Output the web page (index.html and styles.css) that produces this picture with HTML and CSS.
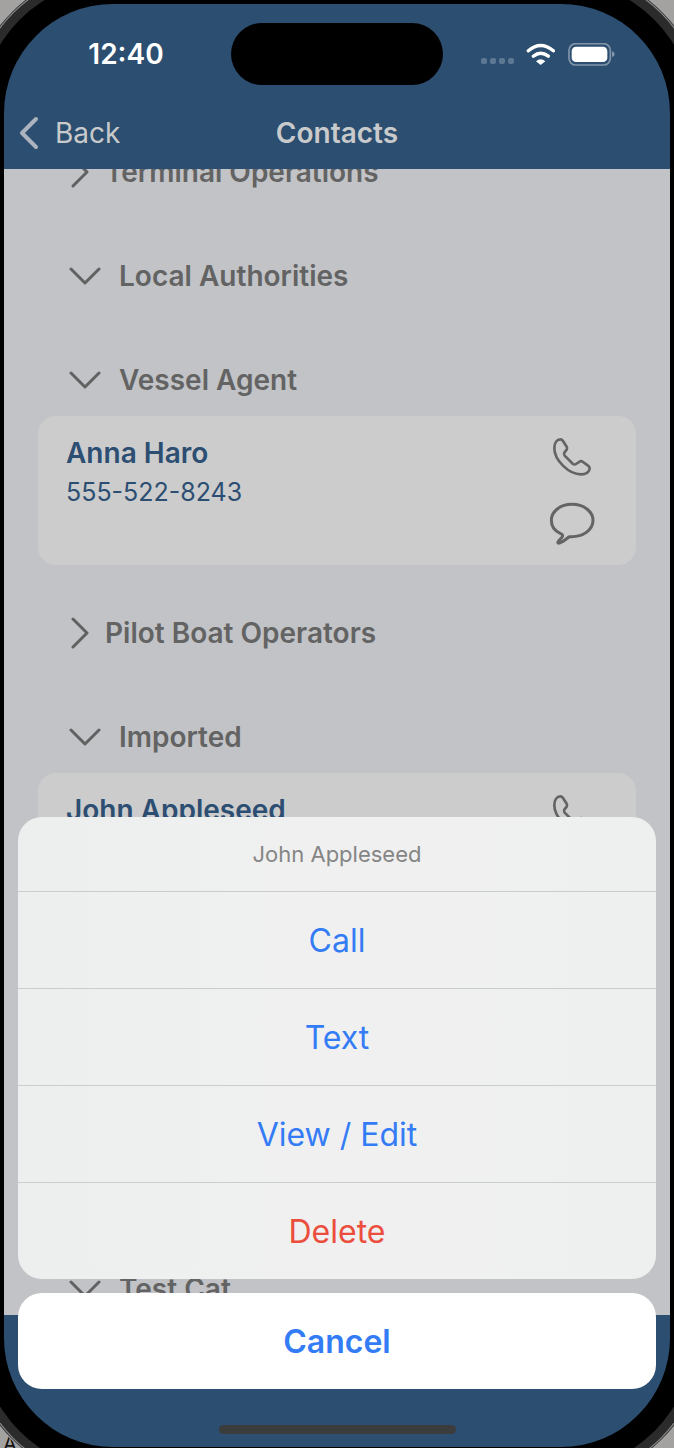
FILE: index.html
```html
<!DOCTYPE html>
<html lang="en">
<head>
<meta charset="utf-8">
<meta name="viewport" content="width=device-width, initial-scale=1">
<title>Contacts</title>
<link rel="stylesheet" href="styles.css">
</head>
<body>
<svg class="defs" aria-hidden="true">
  <symbol id="down" viewBox="0 0 32 18"><path d="M2 2 L16 16 L30 2"/></symbol>
  <symbol id="right" viewBox="0 0 18 32"><path d="M2 2 L16 16 L2 30"/></symbol>
  <symbol id="phone" viewBox="456 112 120 120"><path d="M481 119c-10 0-18 10-18 27c0 36 44 78 80 78c16 0 26-8 26-18c0-4-2-6-5-8L549 187c-4-3-7-3-10-1l-11 7c-3 2-6 2-9 0L494 168c-3-4-3-6-1-9l7-9c2-3 2-6 0-9L489 124c-2-3-5-5-8-5z"/></symbol>
  <symbol id="bubble" viewBox="446 306 138 129"><path d="M508 410C548 412 578 390 578 361C578 334 550 313 515 313S453 334 453 361C453 380 464 394 481 401C488 404 488 407 485 412L474 424C470 429 474 431 480 428C492 424 498 415 508 410Z"/></symbol>
</svg>
<span class="backdrop-letter" aria-hidden="true">A</span>
<div class="phone">
  <header class="header">
    <div class="status">
      <span class="time">12:40</span>
      <span class="island"></span>
      <span class="indicators">
        <span class="dots"><i></i><i></i><i></i><i></i></span>
        <svg class="wifi" viewBox="260 126 90 68" aria-hidden="true">
          <path class="arc" d="M267 149Q304 117 342 149M282 165Q304 147 327 165"/>
          <path class="core" d="M290 180Q304 168 318 180L306 190Q304 192 302 190Z"/>
        </svg>
        <svg class="battery" viewBox="384 126 141 69" aria-hidden="true">
          <rect class="shell" x="387" y="128" width="124" height="64" rx="20"/>
          <rect class="charge" x="395" y="137" width="107" height="46" rx="13"/>
          <path class="nub" d="M516 151Q524 153 524 160Q524 166 516 168Z"/>
        </svg>
      </span>
    </div>
    <nav class="nav">
      <button class="back" type="button">
        <svg viewBox="0 0 20 34" aria-hidden="true"><path d="M17 3 L3 17 L17 31"/></svg>
        Back
      </button>
      <h1>Contacts</h1>
    </nav>
  </header>

  <main class="content">
    <div class="groups">
      <section class="group">
        <button class="row closed" type="button"><svg><use href="#right"/></svg>Terminal Operations</button>
      </section>
      <section class="group">
        <button class="row" type="button"><svg><use href="#down"/></svg>Local Authorities</button>
      </section>
      <section class="group">
        <button class="row" type="button"><svg><use href="#down"/></svg>Vessel Agent</button>
        <article class="card">
          <div class="person"><h2>Anna Haro</h2><p>555-522-8243</p></div>
          <div class="actions">
            <button type="button" aria-label="Call Anna Haro"><svg class="i-phone"><use href="#phone"/></svg></button>
            <button type="button" aria-label="Text Anna Haro"><svg class="i-bubble"><use href="#bubble"/></svg></button>
          </div>
        </article>
      </section>
      <section class="group">
        <button class="row closed" type="button"><svg><use href="#right"/></svg>Pilot Boat Operators</button>
      </section>
      <section class="group grow">
        <button class="row" type="button"><svg><use href="#down"/></svg>Imported</button>
        <article class="card">
          <div class="person"><h2>John Appleseed</h2></div>
          <div class="actions">
            <button type="button" aria-label="Call John Appleseed"><svg class="i-phone"><use href="#phone"/></svg></button>
            <button type="button" aria-label="Text John Appleseed"><svg class="i-bubble"><use href="#bubble"/></svg></button>
          </div>
        </article>
      </section>
      <section class="group">
        <button class="row" type="button"><svg><use href="#down"/></svg>Test Cat</button>
      </section>
    </div>
  </main>
  <footer class="footer"><span class="home"></span></footer>

  <div class="sheet" role="dialog" aria-labelledby="sheet-title">
    <div class="menu">
      <p id="sheet-title">John Appleseed</p>
      <button type="button">Call</button>
      <button type="button">Text</button>
      <button type="button">View / Edit</button>
      <button class="danger" type="button">Delete</button>
    </div>
    <button class="cancel" type="button">Cancel</button>
  </div>
</div>
</body>
</html>
```
FILE: styles.css
```css
* { box-sizing: border-box; }
body {
  margin: 0;
  min-height: 100vh;
  display: flex;
  position: relative;
  overflow: hidden;
  background: #a3a2a0;
  font-family: Inter, "Liberation Sans", sans-serif;
}
h1, h2, p { margin: 0; }
button {
  margin: 0;
  padding: 0;
  border: 0;
  background: none;
  font: inherit;
  color: inherit;
  cursor: pointer;
}
svg { display: block; }
.defs { position: absolute; width: 0; height: 0; }
.backdrop-letter {
  position: absolute;
  left: 3px;
  bottom: -6px;
  font-size: 20px;
  line-height: 20px;
  color: #111;
}

.phone {
  position: relative;
  flex: 1;
  display: flex;
  flex-direction: column;
  margin: 4px 4px 1px;
  border-radius: 109px;
  background: #2c4e70;
  box-shadow:
    0 0 0 23px #000,
    0 0 0 32px #2b2b2b,
    0 0 0 33px #8c8c8c,
    0 0 0 34px #3a3a3a,
    0 0 0 35px #a8a8a8;
}

.header { padding: 4px 0 3px; }
.status {
  display: grid;
  grid-template-columns: 1fr 212px 1fr;
  align-items: center;
  height: 92px;
}
.time {
  padding-left: 17px;
  text-align: center;
  font-size: 28px;
  font-weight: 600;
  color: #fff;
}
.island { height: 62px; border-radius: 31px; background: #000; }
.indicators {
  display: flex;
  align-items: center;
  justify-content: center;
  gap: 12px;
  padding-right: 18px;
}
.dots { display: flex; gap: 3px; padding-top: 14px; }
.dots i { width: 6px; height: 6px; border-radius: 2px; background: #5c7893; }
.wifi { width: 30px; height: 23px; }
.wifi .arc { fill: none; stroke: #fff; stroke-width: 10; stroke-linecap: round; }
.wifi .core { fill: #fff; }
.battery { width: 47px; height: 23px; }
.battery .shell { fill: none; stroke: #8195aa; stroke-width: 5; }
.battery .charge { fill: #fff; }
.battery .nub { fill: #8195aa; }

.nav {
  display: grid;
  grid-template-columns: 1fr auto 1fr;
  align-items: center;
  height: 66px;
  color: #c9cacb;
}
.nav h1 { font-size: 28px; font-weight: 600; }
.back {
  display: flex;
  align-items: center;
  gap: 16px;
  padding-left: 15px;
  font-size: 28px;
}
.back svg {
  width: 20px;
  height: 34px;
  fill: none;
  stroke: #abb4be;
  stroke-width: 4;
  stroke-linecap: round;
  stroke-linejoin: round;
}

.content {
  flex: 1;
  display: flex;
  overflow: hidden;
  background: #c2c3c7;
}
.groups {
  flex: 1;
  display: flex;
  flex-direction: column;
  gap: 32px;
  margin: -33px 34px -10px;
}
.grow { flex: 1; }
.row {
  display: flex;
  align-items: center;
  gap: 18px;
  width: 100%;
  height: 72px;
  padding-left: 31px;
  font-size: 28px;
  font-weight: 600;
  color: #636363;
}
.row svg {
  width: 32px;
  height: 18px;
  fill: none;
  stroke: #616161;
  stroke-width: 3;
  stroke-linecap: round;
  stroke-linejoin: round;
}
.row.closed { gap: 16px; padding-left: 33px; }
.row.closed svg { width: 18px; height: 32px; }

.card {
  display: flex;
  justify-content: space-between;
  min-height: 149px;
  padding: 18px 41px 18px 28px;
  border-radius: 18px;
  background: #cccccc;
  color: #2c4e72;
}
.person h2 { font-size: 28px; line-height: 39px; font-weight: 600; }
.person p { font-size: 25px; line-height: 39px; }
.actions {
  display: flex;
  flex-direction: column;
  align-items: center;
  gap: 25px;
  padding-top: 3px;
}
.actions svg { fill: none; stroke: #646464; stroke-width: 8; stroke-linejoin: round; }
.i-phone { width: 40px; height: 40px; }
.i-bubble { width: 46px; height: 43px; }
.actions .i-bubble { stroke-width: 9; }

.footer {
  display: flex;
  justify-content: center;
  align-items: flex-end;
  height: 132px;
  padding-bottom: 13px;
}
.home { width: 237px; height: 9px; border-radius: 5px; background: #3c3c3c; }

.sheet {
  position: absolute;
  left: 14px;
  right: 14px;
  bottom: 58px;
  display: flex;
  flex-direction: column;
  gap: 14px;
  text-align: center;
}
.menu {
  display: flex;
  flex-direction: column;
  overflow: hidden;
  border-radius: 24px;
  background: linear-gradient(90deg, #edefef, #f0f0f0 50%, #eef0ef);
}
.menu p { font-size: 22px; line-height: 74px; color: #858585; }
.menu button {
  height: 97px;
  border-top: 1px solid #cbcccd;
  font-size: 32px;
  color: #347cf6;
}
.menu .danger { color: #eb4e3d; }
.cancel {
  height: 96px;
  border-radius: 24px;
  background: #fff;
  font-size: 32px;
  font-weight: 600;
  color: #347cf6;
}
```
